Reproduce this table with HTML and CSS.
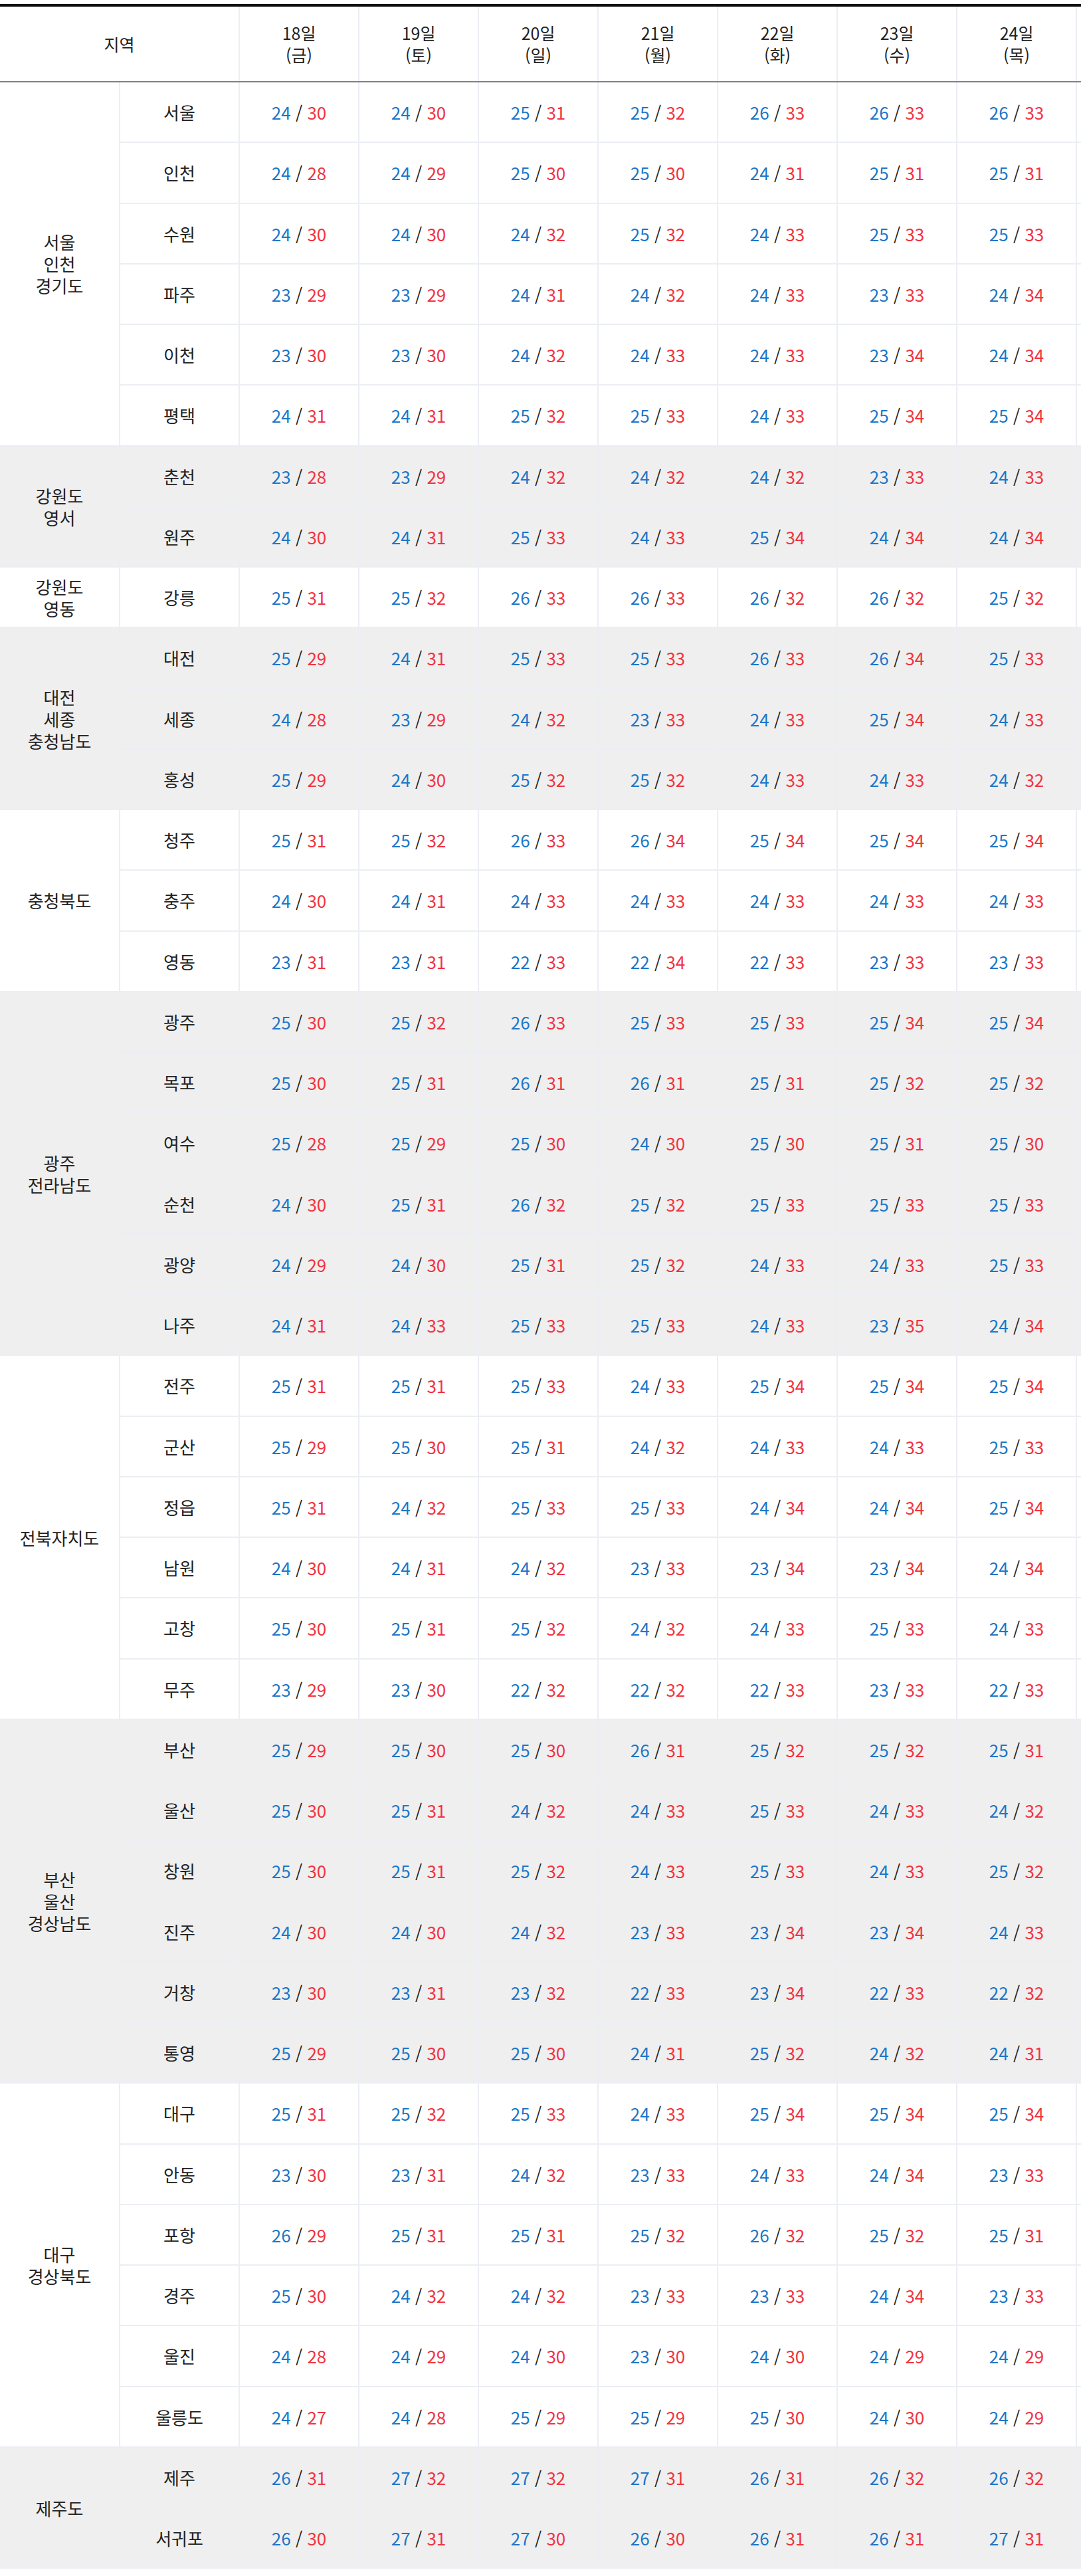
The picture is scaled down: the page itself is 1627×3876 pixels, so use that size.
FILE: index.html
```html
<!DOCTYPE html>
<html lang="ko">
<head>
<meta charset="utf-8">
<title>지역별 기온</title>
<link rel="stylesheet" href="styles.css">
</head>
<body>
<div class="wrap">
<table class="temps">
<colgroup><col><col><col><col><col><col><col><col><col><col></colgroup>
<thead>
<tr><th colspan="2">지역</th><th>18일<br>(금)</th><th>19일<br>(토)</th><th>20일<br>(일)</th><th>21일<br>(월)</th><th>22일<br>(화)</th><th>23일<br>(수)</th><th>24일<br>(목)</th><th class="x"></th></tr>
</thead>
<tbody>
<tr><td class="rg" rowspan="6">서울<br>인천<br>경기도</td><td class="ct">서울</td><td><span class="lo">24</span> / <span class="hi">30</span></td><td><span class="lo">24</span> / <span class="hi">30</span></td><td><span class="lo">25</span> / <span class="hi">31</span></td><td><span class="lo">25</span> / <span class="hi">32</span></td><td><span class="lo">26</span> / <span class="hi">33</span></td><td><span class="lo">26</span> / <span class="hi">33</span></td><td><span class="lo">26</span> / <span class="hi">33</span></td><td class="x"></td></tr>
<tr><td class="ct">인천</td><td><span class="lo">24</span> / <span class="hi">28</span></td><td><span class="lo">24</span> / <span class="hi">29</span></td><td><span class="lo">25</span> / <span class="hi">30</span></td><td><span class="lo">25</span> / <span class="hi">30</span></td><td><span class="lo">24</span> / <span class="hi">31</span></td><td><span class="lo">25</span> / <span class="hi">31</span></td><td><span class="lo">25</span> / <span class="hi">31</span></td><td class="x"></td></tr>
<tr><td class="ct">수원</td><td><span class="lo">24</span> / <span class="hi">30</span></td><td><span class="lo">24</span> / <span class="hi">30</span></td><td><span class="lo">24</span> / <span class="hi">32</span></td><td><span class="lo">25</span> / <span class="hi">32</span></td><td><span class="lo">24</span> / <span class="hi">33</span></td><td><span class="lo">25</span> / <span class="hi">33</span></td><td><span class="lo">25</span> / <span class="hi">33</span></td><td class="x"></td></tr>
<tr><td class="ct">파주</td><td><span class="lo">23</span> / <span class="hi">29</span></td><td><span class="lo">23</span> / <span class="hi">29</span></td><td><span class="lo">24</span> / <span class="hi">31</span></td><td><span class="lo">24</span> / <span class="hi">32</span></td><td><span class="lo">24</span> / <span class="hi">33</span></td><td><span class="lo">23</span> / <span class="hi">33</span></td><td><span class="lo">24</span> / <span class="hi">34</span></td><td class="x"></td></tr>
<tr><td class="ct">이천</td><td><span class="lo">23</span> / <span class="hi">30</span></td><td><span class="lo">23</span> / <span class="hi">30</span></td><td><span class="lo">24</span> / <span class="hi">32</span></td><td><span class="lo">24</span> / <span class="hi">33</span></td><td><span class="lo">24</span> / <span class="hi">33</span></td><td><span class="lo">23</span> / <span class="hi">34</span></td><td><span class="lo">24</span> / <span class="hi">34</span></td><td class="x"></td></tr>
<tr><td class="ct">평택</td><td><span class="lo">24</span> / <span class="hi">31</span></td><td><span class="lo">24</span> / <span class="hi">31</span></td><td><span class="lo">25</span> / <span class="hi">32</span></td><td><span class="lo">25</span> / <span class="hi">33</span></td><td><span class="lo">24</span> / <span class="hi">33</span></td><td><span class="lo">25</span> / <span class="hi">34</span></td><td><span class="lo">25</span> / <span class="hi">34</span></td><td class="x"></td></tr>
</tbody>
<tbody class="alt">
<tr><td class="rg" rowspan="2">강원도<br>영서</td><td class="ct">춘천</td><td><span class="lo">23</span> / <span class="hi">28</span></td><td><span class="lo">23</span> / <span class="hi">29</span></td><td><span class="lo">24</span> / <span class="hi">32</span></td><td><span class="lo">24</span> / <span class="hi">32</span></td><td><span class="lo">24</span> / <span class="hi">32</span></td><td><span class="lo">23</span> / <span class="hi">33</span></td><td><span class="lo">24</span> / <span class="hi">33</span></td><td class="x"></td></tr>
<tr><td class="ct">원주</td><td><span class="lo">24</span> / <span class="hi">30</span></td><td><span class="lo">24</span> / <span class="hi">31</span></td><td><span class="lo">25</span> / <span class="hi">33</span></td><td><span class="lo">24</span> / <span class="hi">33</span></td><td><span class="lo">25</span> / <span class="hi">34</span></td><td><span class="lo">24</span> / <span class="hi">34</span></td><td><span class="lo">24</span> / <span class="hi">34</span></td><td class="x"></td></tr>
</tbody>
<tbody>
<tr><td class="rg">강원도<br>영동</td><td class="ct">강릉</td><td><span class="lo">25</span> / <span class="hi">31</span></td><td><span class="lo">25</span> / <span class="hi">32</span></td><td><span class="lo">26</span> / <span class="hi">33</span></td><td><span class="lo">26</span> / <span class="hi">33</span></td><td><span class="lo">26</span> / <span class="hi">32</span></td><td><span class="lo">26</span> / <span class="hi">32</span></td><td><span class="lo">25</span> / <span class="hi">32</span></td><td class="x"></td></tr>
</tbody>
<tbody class="alt">
<tr><td class="rg" rowspan="3">대전<br>세종<br>충청남도</td><td class="ct">대전</td><td><span class="lo">25</span> / <span class="hi">29</span></td><td><span class="lo">24</span> / <span class="hi">31</span></td><td><span class="lo">25</span> / <span class="hi">33</span></td><td><span class="lo">25</span> / <span class="hi">33</span></td><td><span class="lo">26</span> / <span class="hi">33</span></td><td><span class="lo">26</span> / <span class="hi">34</span></td><td><span class="lo">25</span> / <span class="hi">33</span></td><td class="x"></td></tr>
<tr><td class="ct">세종</td><td><span class="lo">24</span> / <span class="hi">28</span></td><td><span class="lo">23</span> / <span class="hi">29</span></td><td><span class="lo">24</span> / <span class="hi">32</span></td><td><span class="lo">23</span> / <span class="hi">33</span></td><td><span class="lo">24</span> / <span class="hi">33</span></td><td><span class="lo">25</span> / <span class="hi">34</span></td><td><span class="lo">24</span> / <span class="hi">33</span></td><td class="x"></td></tr>
<tr><td class="ct">홍성</td><td><span class="lo">25</span> / <span class="hi">29</span></td><td><span class="lo">24</span> / <span class="hi">30</span></td><td><span class="lo">25</span> / <span class="hi">32</span></td><td><span class="lo">25</span> / <span class="hi">32</span></td><td><span class="lo">24</span> / <span class="hi">33</span></td><td><span class="lo">24</span> / <span class="hi">33</span></td><td><span class="lo">24</span> / <span class="hi">32</span></td><td class="x"></td></tr>
</tbody>
<tbody>
<tr><td class="rg" rowspan="3">충청북도</td><td class="ct">청주</td><td><span class="lo">25</span> / <span class="hi">31</span></td><td><span class="lo">25</span> / <span class="hi">32</span></td><td><span class="lo">26</span> / <span class="hi">33</span></td><td><span class="lo">26</span> / <span class="hi">34</span></td><td><span class="lo">25</span> / <span class="hi">34</span></td><td><span class="lo">25</span> / <span class="hi">34</span></td><td><span class="lo">25</span> / <span class="hi">34</span></td><td class="x"></td></tr>
<tr><td class="ct">충주</td><td><span class="lo">24</span> / <span class="hi">30</span></td><td><span class="lo">24</span> / <span class="hi">31</span></td><td><span class="lo">24</span> / <span class="hi">33</span></td><td><span class="lo">24</span> / <span class="hi">33</span></td><td><span class="lo">24</span> / <span class="hi">33</span></td><td><span class="lo">24</span> / <span class="hi">33</span></td><td><span class="lo">24</span> / <span class="hi">33</span></td><td class="x"></td></tr>
<tr><td class="ct">영동</td><td><span class="lo">23</span> / <span class="hi">31</span></td><td><span class="lo">23</span> / <span class="hi">31</span></td><td><span class="lo">22</span> / <span class="hi">33</span></td><td><span class="lo">22</span> / <span class="hi">34</span></td><td><span class="lo">22</span> / <span class="hi">33</span></td><td><span class="lo">23</span> / <span class="hi">33</span></td><td><span class="lo">23</span> / <span class="hi">33</span></td><td class="x"></td></tr>
</tbody>
<tbody class="alt">
<tr><td class="rg" rowspan="6">광주<br>전라남도</td><td class="ct">광주</td><td><span class="lo">25</span> / <span class="hi">30</span></td><td><span class="lo">25</span> / <span class="hi">32</span></td><td><span class="lo">26</span> / <span class="hi">33</span></td><td><span class="lo">25</span> / <span class="hi">33</span></td><td><span class="lo">25</span> / <span class="hi">33</span></td><td><span class="lo">25</span> / <span class="hi">34</span></td><td><span class="lo">25</span> / <span class="hi">34</span></td><td class="x"></td></tr>
<tr><td class="ct">목포</td><td><span class="lo">25</span> / <span class="hi">30</span></td><td><span class="lo">25</span> / <span class="hi">31</span></td><td><span class="lo">26</span> / <span class="hi">31</span></td><td><span class="lo">26</span> / <span class="hi">31</span></td><td><span class="lo">25</span> / <span class="hi">31</span></td><td><span class="lo">25</span> / <span class="hi">32</span></td><td><span class="lo">25</span> / <span class="hi">32</span></td><td class="x"></td></tr>
<tr><td class="ct">여수</td><td><span class="lo">25</span> / <span class="hi">28</span></td><td><span class="lo">25</span> / <span class="hi">29</span></td><td><span class="lo">25</span> / <span class="hi">30</span></td><td><span class="lo">24</span> / <span class="hi">30</span></td><td><span class="lo">25</span> / <span class="hi">30</span></td><td><span class="lo">25</span> / <span class="hi">31</span></td><td><span class="lo">25</span> / <span class="hi">30</span></td><td class="x"></td></tr>
<tr><td class="ct">순천</td><td><span class="lo">24</span> / <span class="hi">30</span></td><td><span class="lo">25</span> / <span class="hi">31</span></td><td><span class="lo">26</span> / <span class="hi">32</span></td><td><span class="lo">25</span> / <span class="hi">32</span></td><td><span class="lo">25</span> / <span class="hi">33</span></td><td><span class="lo">25</span> / <span class="hi">33</span></td><td><span class="lo">25</span> / <span class="hi">33</span></td><td class="x"></td></tr>
<tr><td class="ct">광양</td><td><span class="lo">24</span> / <span class="hi">29</span></td><td><span class="lo">24</span> / <span class="hi">30</span></td><td><span class="lo">25</span> / <span class="hi">31</span></td><td><span class="lo">25</span> / <span class="hi">32</span></td><td><span class="lo">24</span> / <span class="hi">33</span></td><td><span class="lo">24</span> / <span class="hi">33</span></td><td><span class="lo">25</span> / <span class="hi">33</span></td><td class="x"></td></tr>
<tr><td class="ct">나주</td><td><span class="lo">24</span> / <span class="hi">31</span></td><td><span class="lo">24</span> / <span class="hi">33</span></td><td><span class="lo">25</span> / <span class="hi">33</span></td><td><span class="lo">25</span> / <span class="hi">33</span></td><td><span class="lo">24</span> / <span class="hi">33</span></td><td><span class="lo">23</span> / <span class="hi">35</span></td><td><span class="lo">24</span> / <span class="hi">34</span></td><td class="x"></td></tr>
</tbody>
<tbody>
<tr><td class="rg" rowspan="6">전북자치도</td><td class="ct">전주</td><td><span class="lo">25</span> / <span class="hi">31</span></td><td><span class="lo">25</span> / <span class="hi">31</span></td><td><span class="lo">25</span> / <span class="hi">33</span></td><td><span class="lo">24</span> / <span class="hi">33</span></td><td><span class="lo">25</span> / <span class="hi">34</span></td><td><span class="lo">25</span> / <span class="hi">34</span></td><td><span class="lo">25</span> / <span class="hi">34</span></td><td class="x"></td></tr>
<tr><td class="ct">군산</td><td><span class="lo">25</span> / <span class="hi">29</span></td><td><span class="lo">25</span> / <span class="hi">30</span></td><td><span class="lo">25</span> / <span class="hi">31</span></td><td><span class="lo">24</span> / <span class="hi">32</span></td><td><span class="lo">24</span> / <span class="hi">33</span></td><td><span class="lo">24</span> / <span class="hi">33</span></td><td><span class="lo">25</span> / <span class="hi">33</span></td><td class="x"></td></tr>
<tr><td class="ct">정읍</td><td><span class="lo">25</span> / <span class="hi">31</span></td><td><span class="lo">24</span> / <span class="hi">32</span></td><td><span class="lo">25</span> / <span class="hi">33</span></td><td><span class="lo">25</span> / <span class="hi">33</span></td><td><span class="lo">24</span> / <span class="hi">34</span></td><td><span class="lo">24</span> / <span class="hi">34</span></td><td><span class="lo">25</span> / <span class="hi">34</span></td><td class="x"></td></tr>
<tr><td class="ct">남원</td><td><span class="lo">24</span> / <span class="hi">30</span></td><td><span class="lo">24</span> / <span class="hi">31</span></td><td><span class="lo">24</span> / <span class="hi">32</span></td><td><span class="lo">23</span> / <span class="hi">33</span></td><td><span class="lo">23</span> / <span class="hi">34</span></td><td><span class="lo">23</span> / <span class="hi">34</span></td><td><span class="lo">24</span> / <span class="hi">34</span></td><td class="x"></td></tr>
<tr><td class="ct">고창</td><td><span class="lo">25</span> / <span class="hi">30</span></td><td><span class="lo">25</span> / <span class="hi">31</span></td><td><span class="lo">25</span> / <span class="hi">32</span></td><td><span class="lo">24</span> / <span class="hi">32</span></td><td><span class="lo">24</span> / <span class="hi">33</span></td><td><span class="lo">25</span> / <span class="hi">33</span></td><td><span class="lo">24</span> / <span class="hi">33</span></td><td class="x"></td></tr>
<tr><td class="ct">무주</td><td><span class="lo">23</span> / <span class="hi">29</span></td><td><span class="lo">23</span> / <span class="hi">30</span></td><td><span class="lo">22</span> / <span class="hi">32</span></td><td><span class="lo">22</span> / <span class="hi">32</span></td><td><span class="lo">22</span> / <span class="hi">33</span></td><td><span class="lo">23</span> / <span class="hi">33</span></td><td><span class="lo">22</span> / <span class="hi">33</span></td><td class="x"></td></tr>
</tbody>
<tbody class="alt">
<tr><td class="rg" rowspan="6">부산<br>울산<br>경상남도</td><td class="ct">부산</td><td><span class="lo">25</span> / <span class="hi">29</span></td><td><span class="lo">25</span> / <span class="hi">30</span></td><td><span class="lo">25</span> / <span class="hi">30</span></td><td><span class="lo">26</span> / <span class="hi">31</span></td><td><span class="lo">25</span> / <span class="hi">32</span></td><td><span class="lo">25</span> / <span class="hi">32</span></td><td><span class="lo">25</span> / <span class="hi">31</span></td><td class="x"></td></tr>
<tr><td class="ct">울산</td><td><span class="lo">25</span> / <span class="hi">30</span></td><td><span class="lo">25</span> / <span class="hi">31</span></td><td><span class="lo">24</span> / <span class="hi">32</span></td><td><span class="lo">24</span> / <span class="hi">33</span></td><td><span class="lo">25</span> / <span class="hi">33</span></td><td><span class="lo">24</span> / <span class="hi">33</span></td><td><span class="lo">24</span> / <span class="hi">32</span></td><td class="x"></td></tr>
<tr><td class="ct">창원</td><td><span class="lo">25</span> / <span class="hi">30</span></td><td><span class="lo">25</span> / <span class="hi">31</span></td><td><span class="lo">25</span> / <span class="hi">32</span></td><td><span class="lo">24</span> / <span class="hi">33</span></td><td><span class="lo">25</span> / <span class="hi">33</span></td><td><span class="lo">24</span> / <span class="hi">33</span></td><td><span class="lo">25</span> / <span class="hi">32</span></td><td class="x"></td></tr>
<tr><td class="ct">진주</td><td><span class="lo">24</span> / <span class="hi">30</span></td><td><span class="lo">24</span> / <span class="hi">30</span></td><td><span class="lo">24</span> / <span class="hi">32</span></td><td><span class="lo">23</span> / <span class="hi">33</span></td><td><span class="lo">23</span> / <span class="hi">34</span></td><td><span class="lo">23</span> / <span class="hi">34</span></td><td><span class="lo">24</span> / <span class="hi">33</span></td><td class="x"></td></tr>
<tr><td class="ct">거창</td><td><span class="lo">23</span> / <span class="hi">30</span></td><td><span class="lo">23</span> / <span class="hi">31</span></td><td><span class="lo">23</span> / <span class="hi">32</span></td><td><span class="lo">22</span> / <span class="hi">33</span></td><td><span class="lo">23</span> / <span class="hi">34</span></td><td><span class="lo">22</span> / <span class="hi">33</span></td><td><span class="lo">22</span> / <span class="hi">32</span></td><td class="x"></td></tr>
<tr><td class="ct">통영</td><td><span class="lo">25</span> / <span class="hi">29</span></td><td><span class="lo">25</span> / <span class="hi">30</span></td><td><span class="lo">25</span> / <span class="hi">30</span></td><td><span class="lo">24</span> / <span class="hi">31</span></td><td><span class="lo">25</span> / <span class="hi">32</span></td><td><span class="lo">24</span> / <span class="hi">32</span></td><td><span class="lo">24</span> / <span class="hi">31</span></td><td class="x"></td></tr>
</tbody>
<tbody>
<tr><td class="rg" rowspan="6">대구<br>경상북도</td><td class="ct">대구</td><td><span class="lo">25</span> / <span class="hi">31</span></td><td><span class="lo">25</span> / <span class="hi">32</span></td><td><span class="lo">25</span> / <span class="hi">33</span></td><td><span class="lo">24</span> / <span class="hi">33</span></td><td><span class="lo">25</span> / <span class="hi">34</span></td><td><span class="lo">25</span> / <span class="hi">34</span></td><td><span class="lo">25</span> / <span class="hi">34</span></td><td class="x"></td></tr>
<tr><td class="ct">안동</td><td><span class="lo">23</span> / <span class="hi">30</span></td><td><span class="lo">23</span> / <span class="hi">31</span></td><td><span class="lo">24</span> / <span class="hi">32</span></td><td><span class="lo">23</span> / <span class="hi">33</span></td><td><span class="lo">24</span> / <span class="hi">33</span></td><td><span class="lo">24</span> / <span class="hi">34</span></td><td><span class="lo">23</span> / <span class="hi">33</span></td><td class="x"></td></tr>
<tr><td class="ct">포항</td><td><span class="lo">26</span> / <span class="hi">29</span></td><td><span class="lo">25</span> / <span class="hi">31</span></td><td><span class="lo">25</span> / <span class="hi">31</span></td><td><span class="lo">25</span> / <span class="hi">32</span></td><td><span class="lo">26</span> / <span class="hi">32</span></td><td><span class="lo">25</span> / <span class="hi">32</span></td><td><span class="lo">25</span> / <span class="hi">31</span></td><td class="x"></td></tr>
<tr><td class="ct">경주</td><td><span class="lo">25</span> / <span class="hi">30</span></td><td><span class="lo">24</span> / <span class="hi">32</span></td><td><span class="lo">24</span> / <span class="hi">32</span></td><td><span class="lo">23</span> / <span class="hi">33</span></td><td><span class="lo">23</span> / <span class="hi">33</span></td><td><span class="lo">24</span> / <span class="hi">34</span></td><td><span class="lo">23</span> / <span class="hi">33</span></td><td class="x"></td></tr>
<tr><td class="ct">울진</td><td><span class="lo">24</span> / <span class="hi">28</span></td><td><span class="lo">24</span> / <span class="hi">29</span></td><td><span class="lo">24</span> / <span class="hi">30</span></td><td><span class="lo">23</span> / <span class="hi">30</span></td><td><span class="lo">24</span> / <span class="hi">30</span></td><td><span class="lo">24</span> / <span class="hi">29</span></td><td><span class="lo">24</span> / <span class="hi">29</span></td><td class="x"></td></tr>
<tr><td class="ct">울릉도</td><td><span class="lo">24</span> / <span class="hi">27</span></td><td><span class="lo">24</span> / <span class="hi">28</span></td><td><span class="lo">25</span> / <span class="hi">29</span></td><td><span class="lo">25</span> / <span class="hi">29</span></td><td><span class="lo">25</span> / <span class="hi">30</span></td><td><span class="lo">24</span> / <span class="hi">30</span></td><td><span class="lo">24</span> / <span class="hi">29</span></td><td class="x"></td></tr>
</tbody>
<tbody class="alt">
<tr><td class="rg" rowspan="2">제주도</td><td class="ct">제주</td><td><span class="lo">26</span> / <span class="hi">31</span></td><td><span class="lo">27</span> / <span class="hi">32</span></td><td><span class="lo">27</span> / <span class="hi">32</span></td><td><span class="lo">27</span> / <span class="hi">31</span></td><td><span class="lo">26</span> / <span class="hi">31</span></td><td><span class="lo">26</span> / <span class="hi">32</span></td><td><span class="lo">26</span> / <span class="hi">32</span></td><td class="x"></td></tr>
<tr><td class="ct">서귀포</td><td><span class="lo">26</span> / <span class="hi">30</span></td><td><span class="lo">27</span> / <span class="hi">31</span></td><td><span class="lo">27</span> / <span class="hi">30</span></td><td><span class="lo">26</span> / <span class="hi">30</span></td><td><span class="lo">26</span> / <span class="hi">31</span></td><td><span class="lo">26</span> / <span class="hi">31</span></td><td><span class="lo">27</span> / <span class="hi">31</span></td><td class="x"></td></tr>
</tbody>
</table>
</div>
</body>
</html>
```

FILE: styles.css
```css
html, body {
  margin: 0;
  padding: 0;
  background: #fff;
}

body {
  padding-top: 6px;
  font-family: "Noto Sans CJK KR", "Noto Sans", sans-serif;
  color: #222;
}

.wrap {
  width: 1627px;
  overflow: hidden;
  border-top: 4px solid #111;
}

.temps {
  border-collapse: collapse;
  table-layout: fixed;
  width: 1800px;
}

.temps col {
  width: 180px;
}

.temps thead tr {
  height: 113px;
}

.temps th {
  padding: 0;
  font-weight: 400;
  font-size: 25px;
  line-height: 33px;
  color: #222;
  text-align: center;
  vertical-align: middle;
  border-bottom: 2px solid #808080;
  border-right: 2px solid #eceef4;
}

.temps tbody tr {
  height: 91.25px;
}

.temps td {
  padding: 0;
  text-align: center;
  vertical-align: middle;
  font-size: 26px;
  line-height: 33px;
  color: #222;
  border: 2px solid #eceef4;
}

.temps td.rg {
  border-left: 0;
}

.temps tbody.alt td {
  background: #efefef;
}

.temps .lo {
  color: #1c76c8;
}

.temps .hi {
  color: #f2333f;
}
```
